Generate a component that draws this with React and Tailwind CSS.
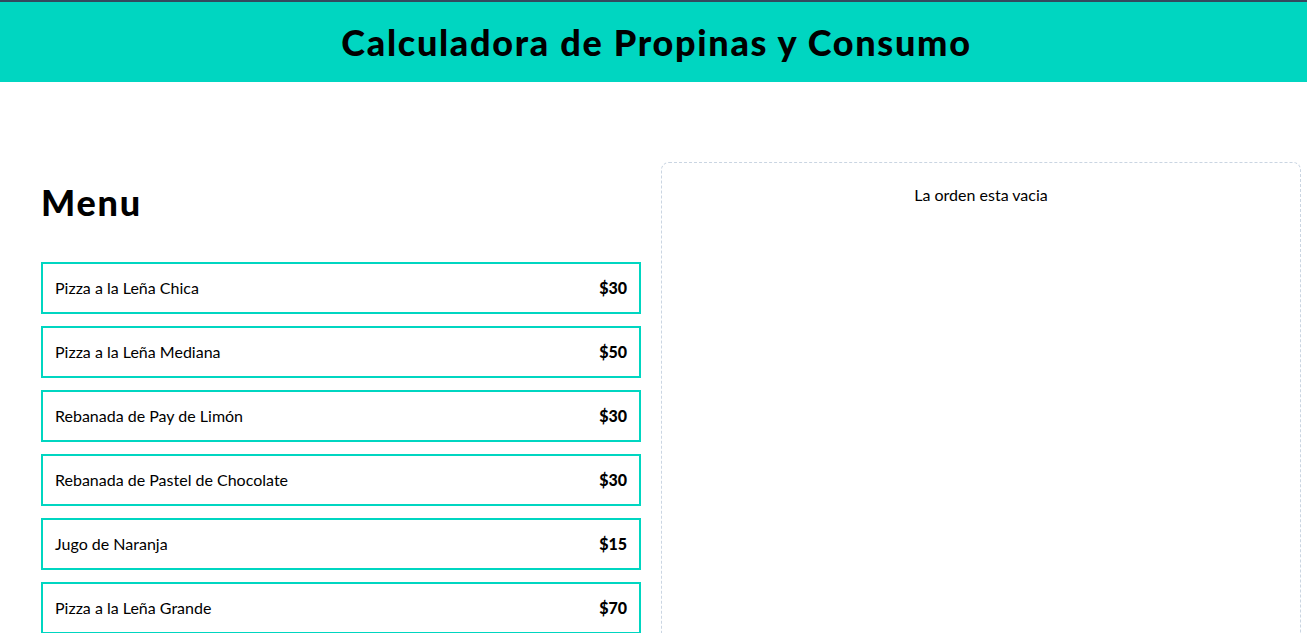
import React from "react";

const items = [
  { name: "Pizza a la Leña Chica", price: 30 },
  { name: "Pizza a la Leña Mediana", price: 50 },
  { name: "Rebanada de Pay de Limón", price: 30 },
  { name: "Rebanada de Pastel de Chocolate", price: 30 },
  { name: "Jugo de Naranja", price: 15 },
  { name: "Pizza a la Leña Grande", price: 70 },
  { name: "Rebanada de Pay de Manzana", price: 30 },
];

export default function App() {
  return (
    <div className="font-['Lato','Noto_Sans',sans-serif] text-black bg-white">
      <header className="bg-[#00d6c1] border-t-2 border-[#34495e] h-[82px] flex items-center justify-center">
        <h1 className="text-4xl font-black text-center tracking-[1.7px] pl-[6px]">Calculadora de Propinas y Consumo</h1>
      </header>
      <main className="w-[1280px] ml-[21px] py-20 grid grid-cols-2">
        <div className="p-5">
          <h2 className="text-4xl font-black tracking-[1.8px]">Menu</h2>
          <div className="space-y-3 mt-10">
            {items.map((it) => (
              <button
                key={it.name}
                className="w-full border-2 border-[#00d6c1] p-3 flex justify-between text-base leading-6"
              >
                <p>{it.name}</p>
                <p className="font-black">${it.price}</p>
              </button>
            ))}
          </div>
        </div>
        <div className="border border-dashed border-slate-300 p-5 rounded-lg">
          <p className="text-center">La orden esta vacia</p>
        </div>
      </main>
    </div>
  );
}
